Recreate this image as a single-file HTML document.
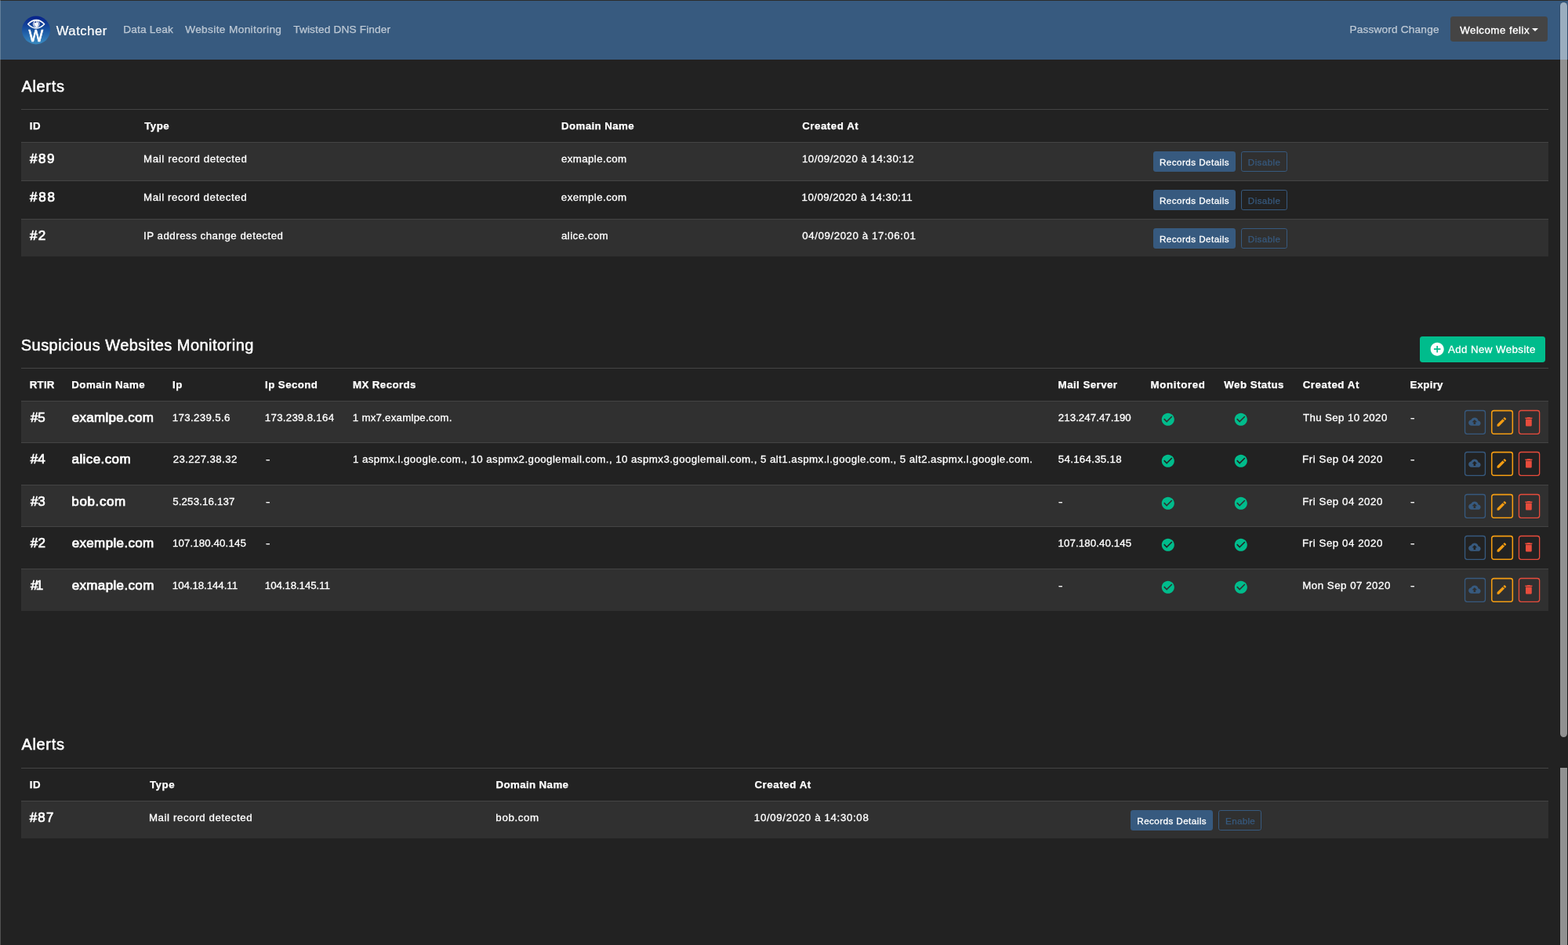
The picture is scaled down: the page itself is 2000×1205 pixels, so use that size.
<!DOCTYPE html>
<html lang="en">
<head>
<meta charset="utf-8">
<title>Watcher</title>
<style>
*{box-sizing:border-box}
html,body{margin:0;padding:0}
body{width:2000px;height:1205px;overflow:hidden;background:#222}
#page{position:relative;width:2000px;height:1205px;overflow:hidden;background:#222;color:#fff;will-change:transform;
 font-family:"Liberation Sans",Arial,sans-serif;font-size:13.3px;line-height:20.4px}
a{text-decoration:none;color:inherit}
span{display:inline-block;white-space:nowrap}
#topline{position:absolute;left:0;top:0;width:2000px;height:1px;background:#2c2c2c}
#leftline{position:absolute;left:0;top:0;width:1px;height:1205px;background:rgba(255,255,255,.22)}
nav{position:absolute;left:0;top:0;width:2000px;height:76px;background:#375a7f}
nav .logo{position:absolute;left:27px;top:20px;width:38px;height:38px}
nav .brand{position:absolute;left:71.5px;top:27px;font-size:16.65px;-webkit-text-stroke:.2px #fff;line-height:26px;color:#fff;white-space:nowrap}
nav a.nl{position:absolute;top:28px;font-size:13.7px;-webkit-text-stroke:.25px rgba(255,255,255,.6);line-height:20.4px;color:rgba(255,255,255,.6);white-space:nowrap}
nav .dd{position:absolute;left:1850px;top:21.4px;width:124px;height:32px;background:#444;border-radius:3.4px;color:#fff;font-size:13.3px;line-height:35px;white-space:nowrap;padding-left:12px}
nav .dd span{-webkit-text-stroke:.35px #fff}
nav .dd i{position:absolute;left:104.1px;top:14.6px;width:0;height:0;border-left:4.3px solid transparent;border-right:4.3px solid transparent;border-top:4.3px solid #fff}
h4{position:absolute;margin:0;left:27px;font-weight:normal;font-size:20px;line-height:24.5px;white-space:nowrap}
h4 span{-webkit-text-stroke:.5px #fff}
#hd1{top:98.3px}#hd2{top:428.3px}#hd3{top:937.3px}
table{position:absolute;left:27.4px;width:1947.6px;border-collapse:separate;table-layout:fixed;border-spacing:0}
#t1{top:139px}#t2{top:469px}#t3{top:979px}
th,td{padding:11.2px 0 0 10.2px;vertical-align:top;text-align:left;border-top:1px solid #444;font-size:13.3px;line-height:20.4px;white-space:nowrap;font-weight:normal;overflow:visible;-webkit-text-stroke:.3px #fff}
thead th{font-weight:bold;font-size:13.3px;height:42px;-webkit-text-stroke:.25px #fff}
tbody tr:nth-child(odd) td{background:#303030}
#t1 tbody td{height:49px}#t1 tbody tr:nth-child(3) td{height:48px}
#t3 tbody td{height:48px}
#t2 tbody td{height:54px}#t2 tbody tr:nth-child(1) td,#t2 tbody tr:nth-child(3) td{height:53px}
td.h5{font-size:17px;line-height:20.4px}
td.h5 span{-webkit-text-stroke:.7px #fff}
.btn{display:inline-block;vertical-align:top;margin-top:-.5px;height:26.4px;border-radius:2.8px;font-size:11.65px;line-height:25.6px;padding:0 0 0 7px;overflow:hidden;border:1px solid #375a7f;white-space:nowrap}
.btn-p{background:#375a7f;color:#fff;width:104.6px}
.btn-p span{-webkit-text-stroke:.3px #fff}
.btn-o{color:#375a7f;margin-left:7.2px;width:58.8px;-webkit-text-stroke:.25px #375a7f}
.ib{position:absolute;top:10px;width:30px;height:33px;display:block}
.ib svg{display:block;width:30px;height:33px}
.ib1{left:10px}.ib2{left:44px}.ib3{left:79px}
.ck{display:block;width:21px;height:21px;margin:1.8px 0 0 12.6px}
#add{position:absolute;left:1810.6px;top:428.5px;width:160.9px;height:33.7px;background:#00bc8c;border-radius:3.4px;color:#fff;font-size:13.3px;line-height:34.7px;-webkit-text-stroke:.3px #fff;white-space:nowrap;padding-left:36px}
#add svg{position:absolute;left:12.3px;top:6.8px;width:20.4px;height:20.4px}
.sb{position:absolute;left:1990px;width:9.1px;background:rgba(255,255,255,.5);border-radius:4.5px;box-shadow:0 0 0 .6px rgba(0,0,0,.25)}
#sb1{top:3px;height:936.8px}#sb2{top:978.8px;height:240px;border-radius:0}

.dash{transform:scaleX(1.25);transform-origin:0 50%}
td.a{position:relative;padding:0;font-size:0}
#t3 .btn-o{width:54.6px}

</style>
</head>
<body>
<div id="page">
<nav>
 <svg class="logo" viewBox="0 0 38 38">
  <defs><linearGradient id="lg" x1="0" y1="0" x2="0" y2="1"><stop offset="0" stop-color="#05208a"/><stop offset=".45" stop-color="#18509f"/><stop offset="1" stop-color="#3a8cc2"/></linearGradient></defs>
  <g transform="translate(1 .45) scale(.9)">
  <circle cx="20" cy="20" r="20" fill="url(#lg)"/>
  <path d="M8.6 11.45 Q14.2 5.75 20.2 5.75 Q26.2 5.75 31.8 11.45 Q26.2 17.25 20.2 17.25 Q14.2 17.25 8.6 11.45Z" fill="none" stroke="#fff" stroke-width="1.7" stroke-linejoin="round"/>
  <circle cx="20.2" cy="11.25" r="4.9" fill="#f6f9fd"/>
  <circle cx="20.2" cy="11.25" r="3.7" fill="none" stroke="#1c3f97" stroke-width=".7" stroke-dasharray="8 3.6" transform="rotate(100 20.2 11.25)"/>
  <circle cx="19.3" cy="8.75" r="1.1" fill="#08257f"/>
  <text x="19.8" y="35.9" text-anchor="middle" font-family="Liberation Sans, Arial, sans-serif" font-size="24.2" fill="#fff" stroke="#fff" stroke-width=".8" textLength="20.6" lengthAdjust="spacingAndGlyphs">W</text>
  </g>
 </svg>

 <a class="brand"><span id="brand" style="letter-spacing:0.549px;margin-left:0.24px">Watcher</span></a>
 <a class="nl" style="left:157px"><span id="n1" style="letter-spacing:0.148px;margin-left:0.18px">Data Leak</span></a>
 <a class="nl" style="left:235px"><span id="n2" style="letter-spacing:0.349px;margin-left:1.15px">Website Monitoring</span></a>
 <a class="nl" style="left:373px"><span id="n3" style="letter-spacing:0.135px;margin-left:1.15px">Twisted DNS Finder</span></a>
 <a class="nl" style="left:1721px"><span id="n4" style="letter-spacing:0.161px;margin-left:0.43px">Password Change</span></a>
 <a class="dd"><span id="n5" style="letter-spacing:0.480px;margin-left:0.28px">Welcome felix</span><i></i></a>
</nav>
<div id="topline"></div>
<div id="leftline"></div>

<h4 id="hd1"><span id="h1" style="letter-spacing:0.670px;margin-left:0.43px">Alerts</span></h4>
<table id="t1">
 <colgroup><col style="width:145.60px"><col style="width:532.30px"><col style="width:307.20px"><col style="width:448.50px"><col style="width:514.00px"></colgroup>
 <thead><tr><th><span id="t1h0" style="letter-spacing:0.622px;margin-left:0.20px">ID</span></th><th><span id="t1h1" style="letter-spacing:0.513px;margin-left:0.98px">Type</span></th><th><span id="t1h2" style="letter-spacing:0.411px;margin-left:0.45px">Domain Name</span></th><th><span id="t1h3" style="letter-spacing:0.530px;margin-left:0.52px">Created At</span></th><th></th></tr></thead>
 <tbody>
  <tr><td class="h5"><span id="t1r0c0" style="letter-spacing:1.638px;margin-left:0.34px">#89</span></td><td><span id="t1r0c1" style="letter-spacing:0.598px;margin-left:-0.12px">Mail record detected</span></td><td><span id="t1r0c2" style="letter-spacing:0.413px;margin-left:0.43px">exmaple.com</span></td><td><span id="t1r0c3" style="letter-spacing:0.486px;margin-left:0.29px">10/09/2020 à 14:30:12</span></td><td class="bt"><a class="btn btn-p"><span id="t1r0b0" style="letter-spacing:0.463px;margin-left:-0.29px">Records Details</span></a><a class="btn btn-o"><span id="t1r0b1" style="letter-spacing:0.392px;margin-left:0.92px">Disable</span></a></td></tr>
  <tr><td class="h5"><span id="t1r1c0" style="letter-spacing:1.845px;margin-left:0.32px">#88</span></td><td><span id="t1r1c1" style="letter-spacing:0.580px;margin-left:-0.09px">Mail record detected</span></td><td><span id="t1r1c2" style="letter-spacing:0.423px;margin-left:0.36px">exemple.com</span></td><td><span id="t1r1c3" style="letter-spacing:0.449px;margin-left:-0.09px">10/09/2020 à 14:30:11</span></td><td class="bt"><a class="btn btn-p"><span id="t1r1b0" style="letter-spacing:0.463px;margin-left:-0.29px">Records Details</span></a><a class="btn btn-o"><span id="t1r1b1" style="letter-spacing:0.389px;margin-left:0.93px">Disable</span></a></td></tr>
  <tr><td class="h5"><span id="t1r2c0" style="letter-spacing:1.300px;margin-left:0.34px">#2</span></td><td><span id="t1r2c1" style="letter-spacing:0.505px;margin-left:-0.19px">IP address change detected</span></td><td><span id="t1r2c2" style="letter-spacing:0.449px;margin-left:0.44px">alice.com</span></td><td><span id="t1r2c3" style="letter-spacing:0.578px;margin-left:0.58px">04/09/2020 à 17:06:01</span></td><td class="bt"><a class="btn btn-p"><span id="t1r2b0" style="letter-spacing:0.463px;margin-left:-0.29px">Records Details</span></a><a class="btn btn-o"><span id="t1r2b1" style="letter-spacing:0.392px;margin-left:0.92px">Disable</span></a></td></tr>
 </tbody>
</table>

<h4 id="hd2"><span id="h2" style="letter-spacing:0.467px;margin-left:-0.28px">Suspicious Websites Monitoring</span></h4>
<a id="add"><svg viewBox="0 0 24 24"><path fill="#fff" d="M12 2C6.48 2 2 6.48 2 12s4.48 10 10 10 10-4.48 10-10S17.52 2 12 2zm5 11h-4v4h-2v-4H7v-2h4V7h2v4h4v2z"/></svg><span id="addt" style="letter-spacing:0.422px;margin-left:0.37px">Add New Website</span></a>
<table id="t2">
 <colgroup><col style="width:53.60px"><col style="width:128.80px"><col style="width:118.00px"><col style="width:112.00px"><col style="width:899.40px"><col style="width:118.00px"><col style="width:93.00px"><col style="width:101.00px"><col style="width:137.00px"><col style="width:68.80px"><col style="width:118.00px"></colgroup>
 <thead><tr><th><span id="t2h0" style="letter-spacing:0.219px;margin-left:0.23px">RTIR</span></th><th><span id="t2h1" style="letter-spacing:0.464px;margin-left:0.12px">Domain Name</span></th><th><span id="t2h2" style="letter-spacing:0.530px;margin-left:0.12px">Ip</span></th><th><span id="t2h3" style="letter-spacing:0.418px;margin-left:0.12px">Ip Second</span></th><th><span id="t2h4" style="letter-spacing:0.405px;margin-left:-0.00px">MX Records</span></th><th><span id="t2h5" style="letter-spacing:0.446px;margin-left:0.25px">Mail Server</span></th><th><span id="t2h6" style="letter-spacing:0.618px;margin-left:0.25px">Monitored</span></th><th><span id="t2h7" style="letter-spacing:0.439px;margin-left:1.01px">Web Status</span></th><th><span id="t2h8" style="letter-spacing:0.549px;margin-left:0.29px">Created At</span></th><th><span id="t2h9" style="letter-spacing:0.247px;margin-left:0.25px">Expiry</span></th><th></th></tr></thead>
 <tbody>
  <tr><td class="h5"><span id="t2r0c0" style="letter-spacing:-0.110px;margin-left:1.30px">#5</span></td><td class="h5"><span id="t2r0c1" style="letter-spacing:0.318px;margin-left:0.48px">examlpe.com</span></td><td><span id="t2r0c2" style="letter-spacing:0.333px;margin-left:-0.11px">173.239.5.6</span></td><td><span id="t2r0c3" style="letter-spacing:0.261px;margin-left:-0.11px">173.239.8.164</span></td><td><span id="t2r0c4" style="letter-spacing:0.223px;margin-left:-0.11px">1 mx7.examlpe.com.</span></td><td><span id="t2r0c5" style="letter-spacing:0.034px;margin-left:0.50px">213.247.47.190</span></td><td class="c"><svg class="ck" viewBox="0 0 21 21"><path transform="translate(.14 .1) scale(.805)" fill="#00bc8c" d="M12 2C6.48 2 2 6.48 2 12s4.48 10 10 10 10-4.48 10-10S17.52 2 12 2zm-2 15l-5-5 1.41-1.41L10 14.17l7.59-7.59L19 8l-9 9z"/></svg></td><td class="c"><svg class="ck" viewBox="0 0 21 21"><path transform="translate(.14 .1) scale(.805)" fill="#00bc8c" d="M12 2C6.48 2 2 6.48 2 12s4.48 10 10 10 10-4.48 10-10S17.52 2 12 2zm-2 15l-5-5 1.41-1.41L10 14.17l7.59-7.59L19 8l-9 9z"/></svg></td><td><span id="t2r0c6" style="letter-spacing:0.378px;margin-left:0.62px">Thu Sep 10 2020</span></td><td><span id="t2r0c7" class="dash" style="margin-left:0.32px">-</span></td><td class="a"><a class="ib ib1"><svg viewBox="0 0 30 33"><rect x="1.55" y="1.50" width="25.90" height="29.80" rx="2.7" fill="none" stroke="#375a7f" stroke-width="1.3"/><path transform="translate(6.11 7.96) scale(.645)" fill="#375a7f" d="M19.35 10.04C18.67 6.59 15.64 4 12 4 9.11 4 6.6 5.64 5.35 8.04 2.34 8.36 0 10.91 0 14c0 3.31 2.69 6 6 6h13c2.76 0 5-2.24 5-5 0-2.64-2.05-4.78-4.65-4.96zM14 13v4h-4v-4H7l5-5 5 5h-3z"/></svg></a><a class="ib ib2"><svg viewBox="0 0 30 33"><rect x="1.73" y="1.62" width="26.60" height="29.55" rx="2.7" fill="none" stroke="#f39c12" stroke-width="1.55"/><path transform="translate(6.61 8.21) scale(.645)" fill="#f39c12" d="M3 17.25V21h3.75L17.81 9.94l-3.75-3.75L3 17.25zM20.71 7.04c.39-.39.39-1.02 0-1.41l-2.34-2.34c-.39-.39-1.02-.39-1.41 0l-1.83 1.83 3.75 3.75 1.83-1.83z"/></svg></a><a class="ib ib3"><svg viewBox="0 0 30 33"><rect x="1.45" y="1.50" width="26.20" height="29.80" rx="2.7" fill="none" stroke="#e74c3c" stroke-width="1.3"/><path transform="translate(6.16 8.01) scale(.645)" fill="#e74c3c" d="M6 19c0 1.1.9 2 2 2h8c1.1 0 2-.9 2-2V7H6v12zM19 4h-3.5l-1-1h-5l-1 1H5v2h14V4z"/></svg></a></td></tr>
  <tr><td class="h5"><span id="t2r1c0" style="letter-spacing:-0.040px;margin-left:1.28px">#4</span></td><td class="h5"><span id="t2r1c1" style="letter-spacing:0.391px;margin-left:0.45px">alice.com</span></td><td><span id="t2r1c2" style="letter-spacing:0.370px;margin-left:0.66px">23.227.38.32</span></td><td><span id="t2r1c3" class="dash" style="margin-left:1.05px">-</span></td><td><span id="t2r1c4" style="letter-spacing:0.438px;margin-left:0.01px">1 aspmx.l.google.com., 10 aspmx2.googlemail.com., 10 aspmx3.googlemail.com., 5 alt1.aspmx.l.google.com., 5 alt2.aspmx.l.google.com.</span></td><td><span id="t2r1c5" style="letter-spacing:0.282px;margin-left:0.46px">54.164.35.18</span></td><td class="c"><svg class="ck" viewBox="0 0 21 21"><path transform="translate(.14 .1) scale(.805)" fill="#00bc8c" d="M12 2C6.48 2 2 6.48 2 12s4.48 10 10 10 10-4.48 10-10S17.52 2 12 2zm-2 15l-5-5 1.41-1.41L10 14.17l7.59-7.59L19 8l-9 9z"/></svg></td><td class="c"><svg class="ck" viewBox="0 0 21 21"><path transform="translate(.14 .1) scale(.805)" fill="#00bc8c" d="M12 2C6.48 2 2 6.48 2 12s4.48 10 10 10 10-4.48 10-10S17.52 2 12 2zm-2 15l-5-5 1.41-1.41L10 14.17l7.59-7.59L19 8l-9 9z"/></svg></td><td><span id="t2r1c6" style="letter-spacing:0.550px;margin-left:-0.29px">Fri Sep 04 2020</span></td><td><span id="t2r1c7" class="dash" style="margin-left:0.45px">-</span></td><td class="a"><a class="ib ib1"><svg viewBox="0 0 30 33"><rect x="1.55" y="1.50" width="25.90" height="29.80" rx="2.7" fill="none" stroke="#375a7f" stroke-width="1.3"/><path transform="translate(6.11 7.96) scale(.645)" fill="#375a7f" d="M19.35 10.04C18.67 6.59 15.64 4 12 4 9.11 4 6.6 5.64 5.35 8.04 2.34 8.36 0 10.91 0 14c0 3.31 2.69 6 6 6h13c2.76 0 5-2.24 5-5 0-2.64-2.05-4.78-4.65-4.96zM14 13v4h-4v-4H7l5-5 5 5h-3z"/></svg></a><a class="ib ib2"><svg viewBox="0 0 30 33"><rect x="1.73" y="1.62" width="26.60" height="29.55" rx="2.7" fill="none" stroke="#f39c12" stroke-width="1.55"/><path transform="translate(6.61 8.21) scale(.645)" fill="#f39c12" d="M3 17.25V21h3.75L17.81 9.94l-3.75-3.75L3 17.25zM20.71 7.04c.39-.39.39-1.02 0-1.41l-2.34-2.34c-.39-.39-1.02-.39-1.41 0l-1.83 1.83 3.75 3.75 1.83-1.83z"/></svg></a><a class="ib ib3"><svg viewBox="0 0 30 33"><rect x="1.45" y="1.50" width="26.20" height="29.80" rx="2.7" fill="none" stroke="#e74c3c" stroke-width="1.3"/><path transform="translate(6.16 8.01) scale(.645)" fill="#e74c3c" d="M6 19c0 1.1.9 2 2 2h8c1.1 0 2-.9 2-2V7H6v12zM19 4h-3.5l-1-1h-5l-1 1H5v2h14V4z"/></svg></a></td></tr>
  <tr><td class="h5"><span id="t2r2c0" style="letter-spacing:0.025px;margin-left:1.30px">#3</span></td><td class="h5"><span id="t2r2c1" style="letter-spacing:0.617px;margin-left:0.17px">bob.com</span></td><td><span id="t2r2c2" style="letter-spacing:0.155px;margin-left:0.18px">5.253.16.137</span></td><td><span id="t2r2c3" class="dash" style="margin-left:1.02px">-</span></td><td></td><td><span id="t2r2c5" class="dash" style="margin-left:0.32px">-</span></td><td class="c"><svg class="ck" viewBox="0 0 21 21"><path transform="translate(.14 .1) scale(.805)" fill="#00bc8c" d="M12 2C6.48 2 2 6.48 2 12s4.48 10 10 10 10-4.48 10-10S17.52 2 12 2zm-2 15l-5-5 1.41-1.41L10 14.17l7.59-7.59L19 8l-9 9z"/></svg></td><td class="c"><svg class="ck" viewBox="0 0 21 21"><path transform="translate(.14 .1) scale(.805)" fill="#00bc8c" d="M12 2C6.48 2 2 6.48 2 12s4.48 10 10 10 10-4.48 10-10S17.52 2 12 2zm-2 15l-5-5 1.41-1.41L10 14.17l7.59-7.59L19 8l-9 9z"/></svg></td><td><span id="t2r2c6" style="letter-spacing:0.540px;margin-left:-0.20px">Fri Sep 04 2020</span></td><td><span id="t2r2c7" class="dash" style="margin-left:0.32px">-</span></td><td class="a"><a class="ib ib1"><svg viewBox="0 0 30 33"><rect x="1.55" y="1.50" width="25.90" height="29.80" rx="2.7" fill="none" stroke="#375a7f" stroke-width="1.3"/><path transform="translate(6.11 7.96) scale(.645)" fill="#375a7f" d="M19.35 10.04C18.67 6.59 15.64 4 12 4 9.11 4 6.6 5.64 5.35 8.04 2.34 8.36 0 10.91 0 14c0 3.31 2.69 6 6 6h13c2.76 0 5-2.24 5-5 0-2.64-2.05-4.78-4.65-4.96zM14 13v4h-4v-4H7l5-5 5 5h-3z"/></svg></a><a class="ib ib2"><svg viewBox="0 0 30 33"><rect x="1.73" y="1.62" width="26.60" height="29.55" rx="2.7" fill="none" stroke="#f39c12" stroke-width="1.55"/><path transform="translate(6.61 8.21) scale(.645)" fill="#f39c12" d="M3 17.25V21h3.75L17.81 9.94l-3.75-3.75L3 17.25zM20.71 7.04c.39-.39.39-1.02 0-1.41l-2.34-2.34c-.39-.39-1.02-.39-1.41 0l-1.83 1.83 3.75 3.75 1.83-1.83z"/></svg></a><a class="ib ib3"><svg viewBox="0 0 30 33"><rect x="1.45" y="1.50" width="26.20" height="29.80" rx="2.7" fill="none" stroke="#e74c3c" stroke-width="1.3"/><path transform="translate(6.16 8.01) scale(.645)" fill="#e74c3c" d="M6 19c0 1.1.9 2 2 2h8c1.1 0 2-.9 2-2V7H6v12zM19 4h-3.5l-1-1h-5l-1 1H5v2h14V4z"/></svg></a></td></tr>
  <tr><td class="h5"><span id="t2r3c0" style="letter-spacing:0.124px;margin-left:1.28px">#2</span></td><td class="h5"><span id="t2r3c1" style="letter-spacing:0.355px;margin-left:0.47px">exemple.com</span></td><td><span id="t2r3c2" style="letter-spacing:0.107px;margin-left:0.01px">107.180.40.145</span></td><td><span id="t2r3c3" class="dash" style="margin-left:1.05px">-</span></td><td></td><td><span id="t2r3c5" style="letter-spacing:0.084px;margin-left:0.23px">107.180.40.145</span></td><td class="c"><svg class="ck" viewBox="0 0 21 21"><path transform="translate(.14 .1) scale(.805)" fill="#00bc8c" d="M12 2C6.48 2 2 6.48 2 12s4.48 10 10 10 10-4.48 10-10S17.52 2 12 2zm-2 15l-5-5 1.41-1.41L10 14.17l7.59-7.59L19 8l-9 9z"/></svg></td><td class="c"><svg class="ck" viewBox="0 0 21 21"><path transform="translate(.14 .1) scale(.805)" fill="#00bc8c" d="M12 2C6.48 2 2 6.48 2 12s4.48 10 10 10 10-4.48 10-10S17.52 2 12 2zm-2 15l-5-5 1.41-1.41L10 14.17l7.59-7.59L19 8l-9 9z"/></svg></td><td><span id="t2r3c6" style="letter-spacing:0.550px;margin-left:-0.29px">Fri Sep 04 2020</span></td><td><span id="t2r3c7" class="dash" style="margin-left:0.45px">-</span></td><td class="a"><a class="ib ib1"><svg viewBox="0 0 30 33"><rect x="1.55" y="1.50" width="25.90" height="29.80" rx="2.7" fill="none" stroke="#375a7f" stroke-width="1.3"/><path transform="translate(6.11 7.96) scale(.645)" fill="#375a7f" d="M19.35 10.04C18.67 6.59 15.64 4 12 4 9.11 4 6.6 5.64 5.35 8.04 2.34 8.36 0 10.91 0 14c0 3.31 2.69 6 6 6h13c2.76 0 5-2.24 5-5 0-2.64-2.05-4.78-4.65-4.96zM14 13v4h-4v-4H7l5-5 5 5h-3z"/></svg></a><a class="ib ib2"><svg viewBox="0 0 30 33"><rect x="1.73" y="1.62" width="26.60" height="29.55" rx="2.7" fill="none" stroke="#f39c12" stroke-width="1.55"/><path transform="translate(6.61 8.21) scale(.645)" fill="#f39c12" d="M3 17.25V21h3.75L17.81 9.94l-3.75-3.75L3 17.25zM20.71 7.04c.39-.39.39-1.02 0-1.41l-2.34-2.34c-.39-.39-1.02-.39-1.41 0l-1.83 1.83 3.75 3.75 1.83-1.83z"/></svg></a><a class="ib ib3"><svg viewBox="0 0 30 33"><rect x="1.45" y="1.50" width="26.20" height="29.80" rx="2.7" fill="none" stroke="#e74c3c" stroke-width="1.3"/><path transform="translate(6.16 8.01) scale(.645)" fill="#e74c3c" d="M6 19c0 1.1.9 2 2 2h8c1.1 0 2-.9 2-2V7H6v12zM19 4h-3.5l-1-1h-5l-1 1H5v2h14V4z"/></svg></a></td></tr>
  <tr><td class="h5"><span id="t2r4c0" style="letter-spacing:-2.561px;margin-left:1.30px">#1</span></td><td class="h5"><span id="t2r4c1" style="letter-spacing:0.356px;margin-left:0.48px">exmaple.com</span></td><td><span id="t2r4c2" style="letter-spacing:-0.073px;margin-left:-0.11px">104.18.144.11</span></td><td><span id="t2r4c3" style="letter-spacing:-0.092px;margin-left:-0.11px">104.18.145.11</span></td><td></td><td><span id="t2r4c5" class="dash" style="margin-left:0.32px">-</span></td><td class="c"><svg class="ck" viewBox="0 0 21 21"><path transform="translate(.14 .1) scale(.805)" fill="#00bc8c" d="M12 2C6.48 2 2 6.48 2 12s4.48 10 10 10 10-4.48 10-10S17.52 2 12 2zm-2 15l-5-5 1.41-1.41L10 14.17l7.59-7.59L19 8l-9 9z"/></svg></td><td class="c"><svg class="ck" viewBox="0 0 21 21"><path transform="translate(.14 .1) scale(.805)" fill="#00bc8c" d="M12 2C6.48 2 2 6.48 2 12s4.48 10 10 10 10-4.48 10-10S17.52 2 12 2zm-2 15l-5-5 1.41-1.41L10 14.17l7.59-7.59L19 8l-9 9z"/></svg></td><td><span id="t2r4c6" style="letter-spacing:0.509px;margin-left:-0.20px">Mon Sep 07 2020</span></td><td><span id="t2r4c7" class="dash" style="margin-left:0.32px">-</span></td><td class="a"><a class="ib ib1"><svg viewBox="0 0 30 33"><rect x="1.55" y="1.50" width="25.90" height="29.80" rx="2.7" fill="none" stroke="#375a7f" stroke-width="1.3"/><path transform="translate(6.11 7.96) scale(.645)" fill="#375a7f" d="M19.35 10.04C18.67 6.59 15.64 4 12 4 9.11 4 6.6 5.64 5.35 8.04 2.34 8.36 0 10.91 0 14c0 3.31 2.69 6 6 6h13c2.76 0 5-2.24 5-5 0-2.64-2.05-4.78-4.65-4.96zM14 13v4h-4v-4H7l5-5 5 5h-3z"/></svg></a><a class="ib ib2"><svg viewBox="0 0 30 33"><rect x="1.73" y="1.62" width="26.60" height="29.55" rx="2.7" fill="none" stroke="#f39c12" stroke-width="1.55"/><path transform="translate(6.61 8.21) scale(.645)" fill="#f39c12" d="M3 17.25V21h3.75L17.81 9.94l-3.75-3.75L3 17.25zM20.71 7.04c.39-.39.39-1.02 0-1.41l-2.34-2.34c-.39-.39-1.02-.39-1.41 0l-1.83 1.83 3.75 3.75 1.83-1.83z"/></svg></a><a class="ib ib3"><svg viewBox="0 0 30 33"><rect x="1.45" y="1.50" width="26.20" height="29.80" rx="2.7" fill="none" stroke="#e74c3c" stroke-width="1.3"/><path transform="translate(6.16 8.01) scale(.645)" fill="#e74c3c" d="M6 19c0 1.1.9 2 2 2h8c1.1 0 2-.9 2-2V7H6v12zM19 4h-3.5l-1-1h-5l-1 1H5v2h14V4z"/></svg></a></td></tr>
 </tbody>
</table>

<h4 id="hd3"><span id="h3" style="letter-spacing:0.670px;margin-left:0.43px">Alerts</span></h4>
<table id="t3">
 <colgroup><col style="width:152.40px"><col style="width:442.00px"><col style="width:330.00px"><col style="width:480.50px"><col style="width:542.70px"></colgroup>
 <thead><tr><th><span id="t3h0" style="letter-spacing:0.622px;margin-left:0.20px">ID</span></th><th><span id="t3h1" style="letter-spacing:0.585px;margin-left:0.92px">Type</span></th><th><span id="t3h2" style="letter-spacing:0.392px;margin-left:0.46px">Domain Name</span></th><th><span id="t3h3" style="letter-spacing:0.576px;margin-left:0.41px">Created At</span></th><th></th></tr></thead>
 <tbody>
  <tr><td class="h5"><span id="t3r0c0" style="letter-spacing:1.076px;margin-left:0.27px">#87</span></td><td><span id="t3r0c1" style="letter-spacing:0.593px;margin-left:-0.08px">Mail record detected</span></td><td><span id="t3r0c2" style="letter-spacing:0.637px;margin-left:0.40px">bob.com</span></td><td><span id="t3r0c3" style="letter-spacing:0.642px;margin-left:-0.11px">10/09/2020 à 14:30:08</span></td><td class="bt"><a class="btn btn-p"><span id="t3r0b0" style="letter-spacing:0.428px;margin-left:-0.12px">Records Details</span></a><a class="btn btn-o"><span id="t3r0b1" style="letter-spacing:0.296px;margin-left:0.84px">Enable</span></a></td></tr>
 </tbody>
</table>

<div class="sb" id="sb1"></div>
<div class="sb" id="sb2"></div>
</div>
</body>
</html>
